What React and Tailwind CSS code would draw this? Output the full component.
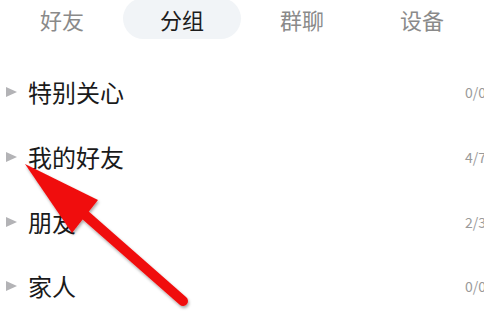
export default function App() {
  const tabs = ["好友", "分组", "群聊", "设备"];
  const groups = [
    ["特别关心", "0/0"],
    ["我的好友", "4/7"],
    ["朋友", "2/3"],
    ["家人", "0/0"],
  ];
  return (
    <div
      className="relative w-[484px] h-[322px] overflow-hidden bg-white"
      style={{ fontFamily: '"Noto Sans CJK SC", "Noto Sans", sans-serif' }}
    >
      <div className="grid grid-cols-4 h-[41px] px-[2px]">
        {tabs.map((t, i) => (
          <div key={t} className="flex items-start justify-center">
            <div
              className={
                "flex items-center justify-center h-[41px] w-[118px] -mt-[2px] rounded-full text-[22px] leading-none " +
                (i === 1 ? "bg-[#f1f4f7] text-[#1c1c1c]" : "text-[#8a8a8a]")
              }
            >
              {t}
            </div>
          </div>
        ))}
      </div>
      <div className="flex flex-col pt-[19px]">
        {groups.map(([name, count]) => (
          <div key={name} className="flex items-center h-[64.67px]">
            <div className="w-[28px] flex items-center pl-[6px]">
              <svg width="11" height="10" viewBox="0 0 11 10">
                <polygon points="0,0 11,5 0,10" fill="#b3b3b6" />
              </svg>
            </div>
            <div className="flex-1 text-[24px] leading-none text-[#1a1a1a]">{name}</div>
            <div className="w-[19px] text-[14px] leading-none text-[#9a9a9a] whitespace-nowrap overflow-visible">
              {count}
            </div>
          </div>
        ))}
      </div>
      <svg
        className="absolute left-0 top-0 pointer-events-none"
        width="484"
        height="322"
        viewBox="0 0 484 322"
      >
        <defs>
          <filter id="sh" x="-20%" y="-20%" width="140%" height="140%">
            <feDropShadow dx="1" dy="2" stdDeviation="1.5" floodColor="#000" floodOpacity="0.35" />
          </filter>
        </defs>
        <g filter="url(#sh)">
          <line x1="84" y1="214" x2="183" y2="301" stroke="#f01010" strokeWidth="10" strokeLinecap="round" />
          <polygon points="25,164 98,200 72,233" fill="#f01010" />
        </g>
      </svg>
    </div>
  );
}
